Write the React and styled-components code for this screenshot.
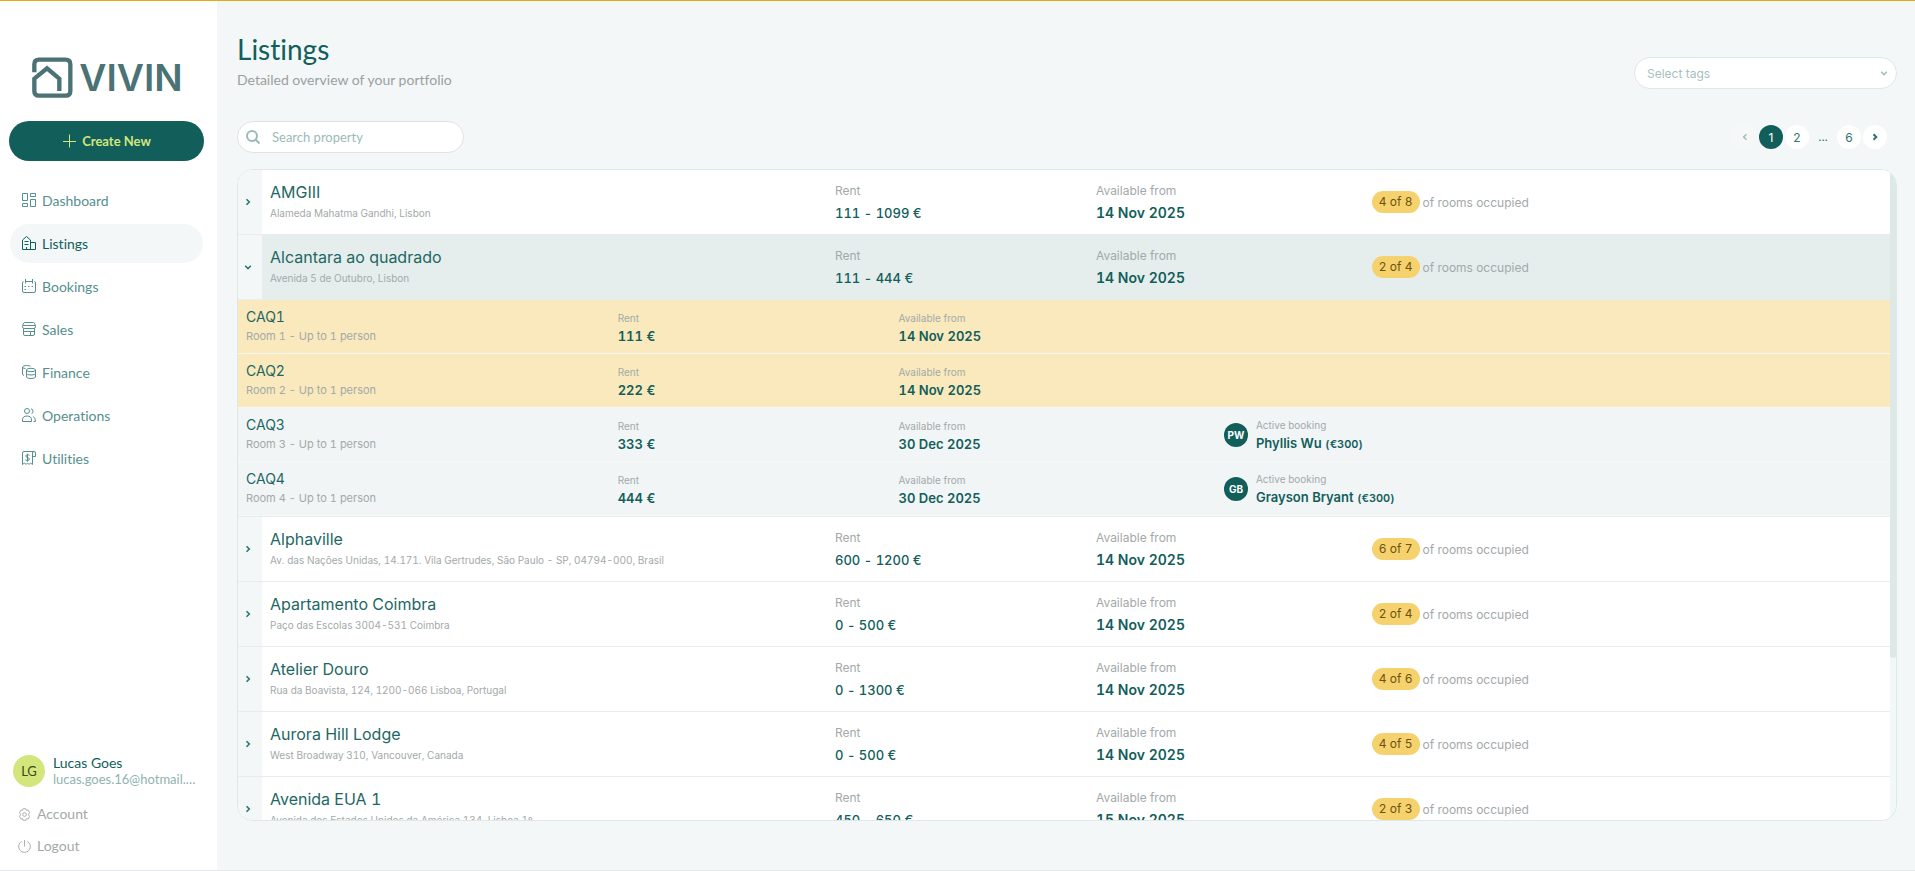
import React, { useState } from 'react';
import styled, { createGlobalStyle } from 'styled-components';

const GlobalStyle = createGlobalStyle`
	* {
		box-sizing: border-box;
	}
	body {
		margin: 0;
		background: #f3f7f8;
		color: #115e5b;
		font-family: 'Inter', sans-serif;
		font-size: 13px;
		font-variant-ligatures: none;
		font-variant-numeric: tabular-nums;
	}
	button, input, select {
		font-family: inherit;
		margin: 0;
	}
`;

const Page = styled.div`
	display: flex;
	height: 100vh;
	border-top: 1px solid #eaa815;
	border-bottom: 1px solid #e6e9e9;
`;

const Sidebar = styled.aside`
	display: flex;
	flex-direction: column;
	flex: none;
	width: 217px;
	padding: 56px 13px 14px 9px;
	background: #fff;
	font-family: 'Lato', sans-serif;
	font-variant-numeric: normal;
`;

const Logo = styled.svg`
	display: block;
	align-self: center;
	width: 150px;
	height: 42px;
	overflow: visible;
	color: #4b7375;
	flex: none;
`;

const CreateButton = styled.button`
	display: flex;
	align-items: center;
	justify-content: center;
	gap: 6px;
	height: 40px;
	margin-top: 22px;
	padding-bottom: 2px;
	border: 0;
	border-radius: 20px;
	background: #115e5b;
	color: #d3e67c;
	font-size: 13px;
	font-weight: 700;
	flex: none;
`;

const Nav = styled.nav`
	display: flex;
	flex-direction: column;
	gap: 4px;
	margin-top: 20px;
	padding: 0 1px;
`;

const NavLink = styled.a`
	display: flex;
	align-items: center;
	gap: 6px;
	height: 39px;
	padding: 0 12px 1px;
	border-radius: 20px;
	background: ${(p) => (p.$active ? '#f3f7f8' : 'transparent')};
	color: ${(p) => (p.$active ? '#115e5b' : '#568f8d')};
	font-size: 14px;
	text-decoration: none;
`;

const User = styled.div`
	display: flex;
	align-items: center;
	gap: 8px;
	margin-top: auto;
	padding: 0 4px;
`;

const Avatar = styled.span`
	display: flex;
	align-items: center;
	justify-content: center;
	flex: none;
	width: ${(p) => (p.$small ? 24 : 32)}px;
	height: ${(p) => (p.$small ? 24 : 32)}px;
	border-radius: 50%;
	background: ${(p) => (p.$small ? '#115e5b' : '#d3e67c')};
	color: ${(p) => (p.$small ? '#fff' : '#3a4a14')};
	font-size: ${(p) => (p.$small ? 10 : 13)}px;
	font-weight: ${(p) => (p.$small ? 700 : 400)};
`;

const UserText = styled.div`
	min-width: 0;
	line-height: 17px;
	font-size: 14px;
`;

const Email = styled.div`
	overflow: hidden;
	color: #8fb3b1;
	font-size: 13px;
	text-overflow: ellipsis;
	white-space: nowrap;
`;

const FootLinks = styled.div`
	display: flex;
	flex-direction: column;
	gap: 12px;
	margin-top: 16px;
	padding: 0 9px;
`;

const FootLink = styled.a`
	display: flex;
	align-items: center;
	gap: 6px;
	color: #a3a9a9;
	font-size: 14px;
	line-height: 20px;
	text-decoration: none;
`;

const Main = styled.main`
	display: flex;
	flex-direction: column;
	flex: 1;
	min-width: 0;
	padding: 32px 18px 49px 20px;
`;

const Header = styled.header`
	display: flex;
	justify-content: space-between;
	align-items: flex-end;
`;

const Title = styled.h1`
	margin: 0;
	font-family: 'Lato', sans-serif;
	font-size: 28px;
	font-weight: 400;
	line-height: 32px;
`;

const Subtitle = styled.p`
	margin: 5px 0 0;
	color: #9a9f9f;
	font-family: 'Lato', sans-serif;
	font-size: 14px;
	line-height: 20px;
`;

const SelectBox = styled.label`
	display: grid;
	align-items: center;
	width: 263px;
	margin-bottom: 1px;
	color: #a5bfbe;

	select, svg {
		grid-area: 1 / 1;
	}
	svg {
		justify-self: end;
		margin-right: 9px;
		pointer-events: none;
	}
`;

const Select = styled.select`
	height: 32px;
	padding: 0 12px;
	border: 1px solid #dde8e7;
	border-radius: 16px;
	background: #fff;
	color: #a5bfbe;
	font-size: 12px;
	appearance: none;
`;

const Toolbar = styled.div`
	display: flex;
	align-items: center;
	justify-content: space-between;
	margin: 31px 0 16px;
	padding-right: 10px;
`;

const Search = styled.label`
	display: flex;
	align-items: center;
	gap: 12px;
	width: 227px;
	height: 32px;
	padding: 0 8px;
	border: 1px solid #dfe3e3;
	border-radius: 16px;
	background: #fff;
	color: #9bbab9;
`;

const SearchInput = styled.input`
	flex: 1;
	min-width: 0;
	padding: 0;
	border: 0;
	outline: 0;
	background: none;
	font-family: 'Lato', sans-serif;
	font-size: 13px;

	&::placeholder {
		color: #9bbab9;
	}
`;

const Pagination = styled.nav`
	display: flex;
	gap: 2px;
`;

const PageButton = styled.button`
	display: flex;
	align-items: center;
	justify-content: center;
	width: 24px;
	height: 24px;
	padding: 0;
	border: 0;
	border-radius: 50%;
	background: ${(p) => (p.$active ? '#115e5b' : '#fff')};
	color: ${(p) => (p.$active ? '#fff' : '#2f7471')};
	font-size: 12px;

	&:disabled {
		background: #f6f8f8;
		color: #a5bfbe;
	}
`;

const Dots = styled.span`
	width: 24px;
	color: #2f7471;
	font-size: 12px;
	line-height: 24px;
	text-align: center;
`;

const Panel = styled.section`
	display: flex;
	flex: 1;
	min-height: 0;
	overflow: hidden;
	border: 1px solid #dde8e7;
	border-radius: 16px;
`;

const Scroller = styled.div`
	flex: 1;
	min-width: 0;
	overflow: hidden;
	background: #fff;
`;

const ScrollTrack = styled.div`
	flex: none;
	width: 6px;
	background: #f3f7f8;
`;

const ScrollThumb = styled.div`
	height: 75%;
	border-radius: 3px;
	background: #dde8e7;
`;

const Table = styled.table`
	width: 100%;
	border-spacing: 0;
	table-layout: fixed;
`;

const Cell = styled.td`
	height: 65px;
	padding: 0 8px;
	border-bottom: 1px solid #e5eeed;
	background: ${(p) => (p.$open ? '#e5eeed' : '#fff')};
`;

const ToggleCell = styled.td`
	padding: 0;
	border-bottom: 1px solid #e5eeed;
	background: #f3f7f8;
`;

const Toggle = styled.button`
	display: flex;
	align-items: center;
	justify-content: center;
	width: 20px;
	height: 24px;
	padding: 0;
	border: 0;
	background: none;
	color: #2f7471;
`;

const RoomsCell = styled.td`
	padding: 0;
	border-bottom: 1px solid #e5eeed;
`;

const RoomCell = styled.td`
	height: 54px;
	padding: 0 8px;
	border-bottom: 1px solid #f6f8f8;
	background: ${(p) => (p.$free ? '#f9e9bc' : '#f1f5f6')};
`;

const Name = styled.div`
	color: #1e6764;
	font-size: ${(p) => (p.$small ? 14 : 16)}px;
	line-height: ${(p) => (p.$small ? 18 : 20)}px;
`;

const Note = styled.div`
	margin: ${(p) => (p.$small ? '1px 0 0' : '4px 0 3px')};
	color: #a3a9a9;
	font-size: ${(p) => (p.$small ? 11 : 10)}px;
	line-height: ${(p) => (p.$small ? 18 : 14)}px;
`;

const Label = styled.div`
	color: #a3a9a9;
	font-size: ${(p) => (p.$small ? 10 : 12)}px;
	line-height: 18px;
`;

const Value = styled.div`
	margin-top: ${(p) => (p.$small ? 0 : 4)}px;
	font-size: ${(p) => (p.$bold && !p.$small ? 14 : 13)}px;
	font-weight: ${(p) => (p.$bold ? 600 : 500)};
	line-height: 18px;

	small {
		font-size: 11px;
	}
`;

const Occupancy = styled.div`
	display: flex;
	align-items: center;
	gap: 3px;
	color: #a3a9a9;
	font-size: 12px;
`;

const Badge = styled.span`
	padding: 0 7px;
	border-radius: 11px;
	background: #f5d26e;
	color: #6e510e;
	font-size: 12px;
	line-height: 22px;
`;

const Booking = styled.div`
	display: flex;
	align-items: center;
	gap: 8px;
`;

const Icon = ({ size = 14, children }) => (
	<svg
		width={size}
		height={size}
		viewBox="0 0 14 14"
		fill="none"
		stroke="currentColor"
		strokeLinejoin="round"
		aria-hidden="true"
	>
		{children}
	</svg>
);

const chevrons = {
	right: 'M2.500 1.200 5.300 4 2.500 6.800',
	left: 'M5.500 1.200 2.700 4l2.800 2.800',
	down: 'M1.200 2.700 4 5.500l2.800-2.800',
};

const Chevron = ({ to, width = 1.6 }) => (
	<svg width="8" height="8" viewBox="0 0 8 8" fill="none" stroke="currentColor" strokeWidth={width} aria-hidden="true">
		<path d={chevrons[to]} />
	</svg>
);

const navItems = [
	{
		label: 'Dashboard',
		icon: <path d="M.5.5h5v7h-5zM.5 10.500h5v3h-5zM8.500.5h5v3h-5zM8.500 6.500h5v7h-5z" />,
	},
	{
		label: 'Listings',
		active: true,
		icon: <path d="M.5 13.500V4L4.500.5l4 3.500v9.500M8.500 6.500h5v7H.5M2.500 5.500h4M2.500 8.500h4M4.500 13.500V11" />,
	},
	{
		label: 'Bookings',
		icon: (
			<>
				<path d="M1.500 2.500Q.5 2.500.5 4v8q0 1.500 1.500 1.500h10q1.500 0 1.500-1.500V4q0-1.500-1-1.500M3.500 0v4.500M10.500 0v4.500M3.500 2.500h7" />
				<path d="M2.500 7.500h2M6 7.500h2M9.500 7.500h2M2.500 10.500h2" strokeDasharray="1.500 .5" />
			</>
		),
	},
	{
		label: 'Sales',
		icon: (
			<path d="M2.500.5h9q1 0 1.500 2l.5 2q0 2-1.500 2H2q-1.500 0-1.500-2l.5-2q.5-2 1.500-2zM.5 3.500h13M1.500 6.500V12q0 1.500 1.500 1.500h8q1.500 0 1.500-1.500V6.500M1.500 9.500h7v4M8.500 9.500h4" />
		),
	},
	{
		label: 'Finance',
		icon: (
			<>
				<path d="M8.500 1.500Q8 .5 4.500.5T.5 2v7q0 1 1.500 1.500M.5 2q0 1.500 3 1.500" />
				<ellipse cx="9" cy="5" rx="4.500" ry="1.700" />
				<path d="M4.500 5v7q0 1.500 4.500 1.500t4.500-1.500V5M4.500 8.500q0 1.500 4.500 1.500t4.500-1.500" />
			</>
		),
	},
	{
		label: 'Operations',
		icon: (
			<>
				<circle cx="5" cy="3" r="2.500" />
				<path d="M.5 13.500v-1.500q0-4 4.500-4t4.500 4v1.500zM9 .8q2 .4 2 2.500T9.500 5.700M11 8.500q2.500 1 2.500 5h-2" />
			</>
		),
	},
	{
		label: 'Utilities',
		icon: (
			<>
				<path d="M.5 13.500V2Q.5.5 2 .5h10q1.500 0 1.500 1.500v3.500h-3V2q0-1.500 1.500-1.500M10.500 5v8.500l-2-1.500-1.500 1.500-1.500-1.500-1.500 1.500-1.500-1.500-2 1.500" />
				<path d="M7.500 4.500Q7 3.700 5.500 3.700T3.700 5q0 1 1.800 1.500t2 1.600q0 1.400-2 1.400T3.300 8.700M5.500 2.700v8" />
			</>
		),
	},
];

const properties = [
	{ name: 'AMGIII', address: 'Alameda Mahatma Gandhi, Lisbon', rent: '111 - 1099 €', from: '14 Nov 2025', rooms: '4 of 8' },
	{ name: 'Alcantara ao quadrado', address: 'Avenida 5 de Outubro, Lisbon', rent: '111 - 444 €', from: '14 Nov 2025', rooms: '2 of 4' },
	{
		name: 'Alphaville',
		address: 'Av. das Nações Unidas, 14.171. Vila Gertrudes, São Paulo - SP, 04794-000, Brasil',
		rent: '600 - 1200 €',
		from: '14 Nov 2025',
		rooms: '6 of 7',
	},
	{ name: 'Apartamento Coimbra', address: 'Paço das Escolas 3004-531 Coimbra', rent: '0 - 500 €', from: '14 Nov 2025', rooms: '2 of 4' },
	{ name: 'Atelier Douro', address: 'Rua da Boavista, 124, 1200-066 Lisboa, Portugal', rent: '0 - 1300 €', from: '14 Nov 2025', rooms: '4 of 6' },
	{ name: 'Aurora Hill Lodge', address: 'West Broadway 310, Vancouver, Canada', rent: '0 - 500 €', from: '14 Nov 2025', rooms: '4 of 5' },
	{ name: 'Avenida EUA 1', address: 'Avenida dos Estados Unidos da América 134, Lisboa 1º', rent: '450 - 650 €', from: '15 Nov 2025', rooms: '2 of 3' },
];

const rooms = [
	{ name: 'CAQ1', note: 'Room 1 - Up to 1 person', rent: '111 €', from: '14 Nov 2025' },
	{ name: 'CAQ2', note: 'Room 2 - Up to 1 person', rent: '222 €', from: '14 Nov 2025' },
	{ name: 'CAQ3', note: 'Room 3 - Up to 1 person', rent: '333 €', from: '30 Dec 2025', guest: 'Phyllis Wu', initials: 'PW' },
	{ name: 'CAQ4', note: 'Room 4 - Up to 1 person', rent: '444 €', from: '30 Dec 2025', guest: 'Grayson Bryant', initials: 'GB' },
];

const Brand = () => (
	<Logo viewBox="0 0 450 126" role="img" aria-label="VIVIN">
		<path
			d="M7 46V22Q7 8 21 8h80q14 0 14 14v80q0 14-14 14H21q-14 0-14-14V65l38-31 37 31v37"
			fill="none"
			stroke="currentColor"
			strokeWidth="13"
		/>
		<text x="142" y="103" fill="currentColor" fontFamily="Inter, sans-serif" fontSize="112" fontWeight="600">
			VIVIN
		</text>
	</Logo>
);

const Rooms = () => (
	<Table>
		<colgroup>
			<col width="22.5%" />
			<col width="17%" />
			<col width="19.7%" />
			<col />
		</colgroup>
		<tbody>
			{rooms.map((room) => (
				<tr key={room.name}>
					<RoomCell $free={!room.guest}>
						<Name $small>{room.name}</Name>
						<Note $small>{room.note}</Note>
					</RoomCell>
					<RoomCell $free={!room.guest}>
						<Label $small>Rent</Label>
						<Value $small $bold>{room.rent}</Value>
					</RoomCell>
					<RoomCell $free={!room.guest}>
						<Label $small>Available from</Label>
						<Value $small $bold>{room.from}</Value>
					</RoomCell>
					<RoomCell $free={!room.guest}>
						{room.guest && (
							<Booking>
								<Avatar $small>{room.initials}</Avatar>
								<div>
									<Label $small>Active booking</Label>
									<Value $small $bold>
										{room.guest} <small>(€300)</small>
									</Value>
								</div>
							</Booking>
						)}
					</RoomCell>
				</tr>
			))}
		</tbody>
	</Table>
);

const App = () => {
	const [open, setOpen] = useState('Alcantara ao quadrado');

	return (
		<Page>
			<GlobalStyle />
			<Sidebar>
				<Brand />
				<CreateButton>
					<Icon>
						<path d="M7.500.5v13M1 7.500h13" />
					</Icon>
					Create New
				</CreateButton>
				<Nav>
					{navItems.map((item) => (
						<NavLink key={item.label} href="#" $active={item.active}>
							<Icon>{item.icon}</Icon>
							{item.label}
						</NavLink>
					))}
				</Nav>
				<User>
					<Avatar>LG</Avatar>
					<UserText>
						<div>Lucas Goes</div>
						<Email>lucas.goes.16@hotmail.com</Email>
					</UserText>
				</User>
				<FootLinks>
					<FootLink href="#">
						<Icon size={13}>
							<path d="M5.500.8h3l.6 1.700 1.800-.3 1.500 2.600L11.300 7l1.100 2.200-1.500 2.600-1.800-.3-.6 1.700h-3l-.6-1.700-1.800.3-1.500-2.600L2.700 7 1.600 4.800l1.500-2.600 1.800.3z" />
							<circle cx="7" cy="7" r="2" />
						</Icon>
						Account
					</FootLink>
					<FootLink href="#">
						<Icon size={13}>
							<path d="M7 0v7M4 1.500a6.300 6.300 0 1 0 6 0" />
						</Icon>
						Logout
					</FootLink>
				</FootLinks>
			</Sidebar>
			<Main>
				<Header>
					<div>
						<Title>Listings</Title>
						<Subtitle>Detailed overview of your portfolio</Subtitle>
					</div>
					<SelectBox>
						<Select aria-label="Select tags" defaultValue="">
							<option value="">Select tags</option>
						</Select>
						<Chevron to="down" />
					</SelectBox>
				</Header>
				<Toolbar>
					<Search>
						<Icon>
							<circle cx="6" cy="6" r="5" strokeWidth="2" />
							<path d="m9.500 9.500 4 4" strokeWidth="2" />
						</Icon>
						<SearchInput type="text" placeholder="Search property" aria-label="Search property" />
					</Search>
					<Pagination aria-label="Pages">
						<PageButton disabled aria-label="Previous page">
							<Chevron to="left" />
						</PageButton>
						<PageButton $active>1</PageButton>
						<PageButton>2</PageButton>
						<Dots>...</Dots>
						<PageButton>6</PageButton>
						<PageButton aria-label="Next page">
							<Chevron to="right" width={2} />
						</PageButton>
					</Pagination>
				</Toolbar>
				<Panel>
					<Scroller>
						<Table>
							<colgroup>
								<col style={{ width: 24 }} />
								<col width="34.2%" />
								<col width="15.8%" />
								<col width="16.7%" />
								<col />
							</colgroup>
							<tbody>
								{properties.map((item) => {
									const isOpen = item.name === open;
									return (
										<React.Fragment key={item.name}>
											<tr>
												<ToggleCell>
													<Toggle
														aria-label={`Toggle ${item.name}`}
														aria-expanded={isOpen}
														onClick={() => setOpen(isOpen ? '' : item.name)}
													>
														<Chevron to={isOpen ? 'down' : 'right'} />
													</Toggle>
												</ToggleCell>
												<Cell $open={isOpen}>
													<Name>{item.name}</Name>
													<Note>{item.address}</Note>
												</Cell>
												<Cell $open={isOpen}>
													<Label>Rent</Label>
													<Value>{item.rent}</Value>
												</Cell>
												<Cell $open={isOpen}>
													<Label>Available from</Label>
													<Value $bold>{item.from}</Value>
												</Cell>
												<Cell $open={isOpen}>
													<Occupancy>
														<Badge>{item.rooms}</Badge>
														of rooms occupied
													</Occupancy>
												</Cell>
											</tr>
											{isOpen && (
												<tr>
													<RoomsCell colSpan={5}>
														<Rooms />
													</RoomsCell>
												</tr>
											)}
										</React.Fragment>
									);
								})}
							</tbody>
						</Table>
					</Scroller>
					<ScrollTrack>
						<ScrollThumb />
					</ScrollTrack>
				</Panel>
			</Main>
		</Page>
	);
};

export default App;
